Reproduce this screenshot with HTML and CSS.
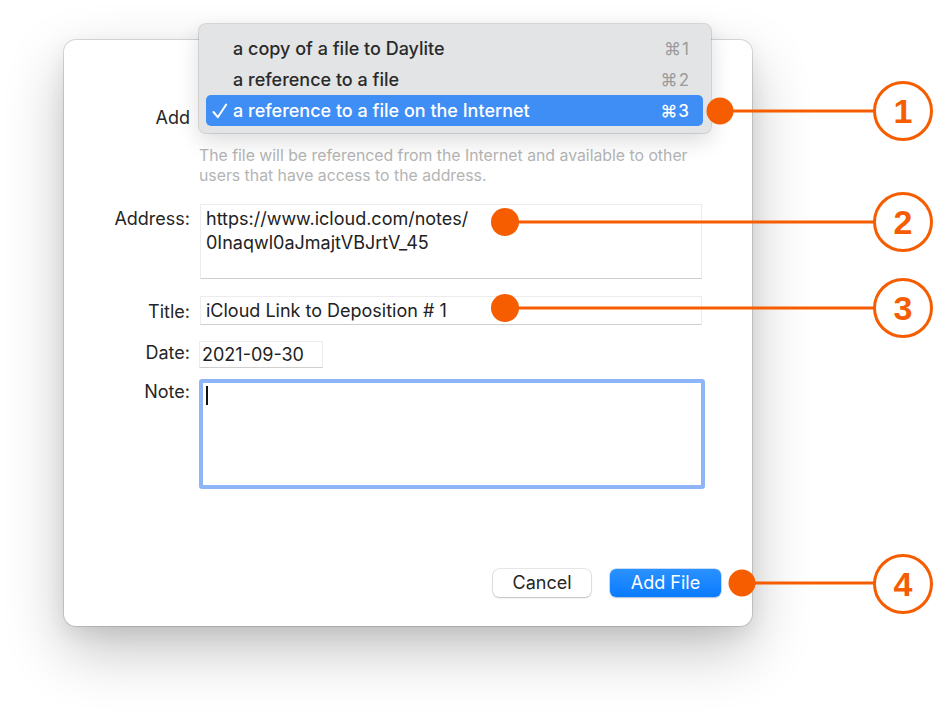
FILE: index.html
```html
<!DOCTYPE html>
<html>
<head>
<meta charset="utf-8">
<link rel="stylesheet" href="styles.css">
</head>
<body>
<div class="stage">
  <div class="dialog">
    <div class="form">
      <div class="label l-add">Add</div>
      <div class="popup"></div>

      <div></div>
      <p class="help">The file will be referenced from the Internet and available to other<br>users that have access to the address.</p>

      <div class="label l-address">Address:</div>
      <div class="field address">https://www.icloud.com/notes/<br>0Inaqwl0aJmajtVBJrtV_45</div>

      <div class="label l-title">Title:</div>
      <div class="field title">iCloud Link to Deposition # 1</div>

      <div class="label l-date">Date:</div>
      <div class="field-row"><div class="field date">2021-09-30</div></div>

      <div class="label l-note">Note:</div>
      <div class="note"><span class="caret"></span></div>
    </div>
    <div class="buttons">
      <div class="btn cancel">Cancel</div>
      <div class="btn primary">Add File</div>
    </div>
  </div>

  <div class="menu">
    <div class="item"><span class="check"></span><span class="text">a copy of a file to Daylite</span><span class="key">⌘1</span></div>
    <div class="item"><span class="check"></span><span class="text">a reference to a file</span><span class="key">⌘2</span></div>
    <div class="item selected"><span class="check"><svg width="16" height="16" viewBox="0 0 16 16"><path d="M1.5 9 L5.8 14.2 L14.2 1.5" fill="none" stroke="#ffffff" stroke-width="2" stroke-linecap="round" stroke-linejoin="round"/></svg></span><span class="text">a reference to a file on the Internet</span><span class="key">⌘3</span></div>
  </div>

  <svg class="callouts" width="934" height="718" viewBox="0 0 934 718">
    <g fill="#f55d00" stroke="#f55d00">
      <line x1="720" y1="111" x2="874" y2="111" stroke-width="3"/>
      <circle cx="720" cy="111" r="13.5" stroke="none"/>
      <line x1="505" y1="222" x2="874" y2="222" stroke-width="3"/>
      <circle cx="505" cy="222" r="14" stroke="none"/>
      <line x1="505" y1="308" x2="874" y2="308" stroke-width="3"/>
      <circle cx="505" cy="308" r="14" stroke="none"/>
      <line x1="742" y1="583" x2="874" y2="583" stroke-width="3"/>
      <circle cx="742" cy="583" r="13.5" stroke="none"/>
    </g>
    <g fill="#ffffff" stroke="#f55d00" stroke-width="3">
      <circle cx="903" cy="111" r="28.5"/>
      <circle cx="903" cy="222" r="28.5"/>
      <circle cx="903" cy="308" r="28.5"/>
      <circle cx="903" cy="584" r="28.5"/>
    </g>
    <g class="num" fill="#f55d00" text-anchor="middle">
      <text x="903" y="123">1</text>
      <text x="903" y="234">2</text>
      <text x="903" y="320">3</text>
      <text x="903" y="596">4</text>
    </g>
  </svg>
</div>
</body>
</html>
```

FILE: styles.css
```css
html, body {
  margin: 0;
  padding: 0;
  background: #ffffff;
}

body {
  font-family: Inter, "Noto Sans", "Liberation Sans", sans-serif;
  color: #262626;
}

.stage {
  position: relative;
  width: 934px;
  height: 718px;
  overflow: hidden;
  padding-top: 40px;
  box-sizing: border-box;
}

.dialog {
  margin-left: 64px;
  width: 688px;
  height: 586px;
  box-sizing: border-box;
  background: #ffffff;
  border-radius: 12px;
  box-shadow: 0 0 0 1px rgba(0, 0, 0, 0.13), 0 24px 60px rgba(0, 0, 0, 0.24), 0 8px 20px rgba(0, 0, 0, 0.07);
  display: flex;
  flex-direction: column;
  padding: 63px 31px 29px 0;
}

.form {
  display: grid;
  grid-template-columns: 126px 502px;
  column-gap: 10px;
  align-items: start;
}

.label {
  text-align: right;
  font-size: 18px;
  color: #262626;
  line-height: 22px;
}

.l-add { margin-top: 4px; }
.popup { height: 27px; }

.help {
  margin: 16px 0 0 -1px;
  font-size: 15.8px;
  line-height: 20px;
  color: #b4b4b4;
  width: 520px;
  white-space: nowrap;
}

.field {
  box-sizing: border-box;
  background: #ffffff;
  border: 1px solid #ececec;
  border-bottom-color: #cfcfcf;
  font-size: 18px;
  color: #222;
  padding: 0 5px;
}

.l-address { margin-top: 22px; }
.address {
  margin-top: 18px;
  height: 75px;
  padding-top: 2px;
  line-height: 24px;
}

.l-title { margin-top: 22px; }
.title {
  margin-top: 17px;
  height: 29px;
  line-height: 28px;
}

.l-date { margin-top: 17px; }
.field-row { margin-top: 16px; display: flex; }
.date {
  width: 124px;
  height: 27px;
  line-height: 25px;
  padding: 0 2px;
  margin-left: -1px;
}

.l-note { margin-top: 13px; }
.note {
  margin-top: 11px;
  margin-left: -1px;
  width: 506px;
  height: 110px;
  box-sizing: border-box;
  border: 4px solid #8db5f7;
  border-radius: 3px;
  background: #fff;
  padding: 3px 3px;
}

.caret {
  display: block;
  width: 1.5px;
  height: 19px;
  background: #111;
}

.buttons {
  margin-top: auto;
  display: flex;
  justify-content: flex-end;
  gap: 19px;
}

.btn {
  height: 28px;
  box-sizing: border-box;
  border-radius: 6px;
  font-size: 18px;
  line-height: 28px;
  text-align: center;
}

.cancel {
  width: 98px;
  background: #ffffff;
  color: #262626;
  box-shadow: 0 0 0 0.5px rgba(0, 0, 0, 0.18), 0 1px 2px rgba(0, 0, 0, 0.18);
}

.primary {
  width: 111px;
  color: #ffffff;
  background: linear-gradient(#2a92ff, #0a7bff);
  box-shadow: 0 0 0 0.5px rgba(0, 90, 220, 0.4), 0 1px 2px rgba(0, 0, 0, 0.15);
}

/* dropdown menu overlay */
.menu {
  position: absolute;
  left: 199px;
  top: 24px;
  width: 512px;
  height: 109px;
  box-sizing: border-box;
  padding: 9px 8px 8px 7px;
  background: #e2e4e6;
  border-radius: 7px;
  box-shadow: 0 0 0 1px rgba(0, 0, 0, 0.12), 0 8px 22px rgba(0, 0, 0, 0.14);
}

.item {
  height: 31px;
  display: flex;
  align-items: center;
  border-radius: 5px;
  font-size: 18px;
  font-weight: 500;
  color: #2a2a2a;
  padding-right: 13px;
}

.item .check {
  width: 27px;
  display: flex;
  justify-content: center;
  padding-left: 0;
}

.item .text { flex: 1; }

.item .key {
  color: #9b9b9b;
  font-size: 17px;
  font-weight: 400;
  letter-spacing: 1px;
}

.item.selected {
  background: #3f8ef6;
  color: #ffffff;
}

.item.selected .key { color: #ffffff; font-weight: 500; }

/* annotations */
.callouts {
  position: absolute;
  left: 0;
  top: 0;
}

.num text {
  font-family: "Liberation Sans", Arial, sans-serif;
  font-weight: bold;
  font-size: 34px;
}
```
